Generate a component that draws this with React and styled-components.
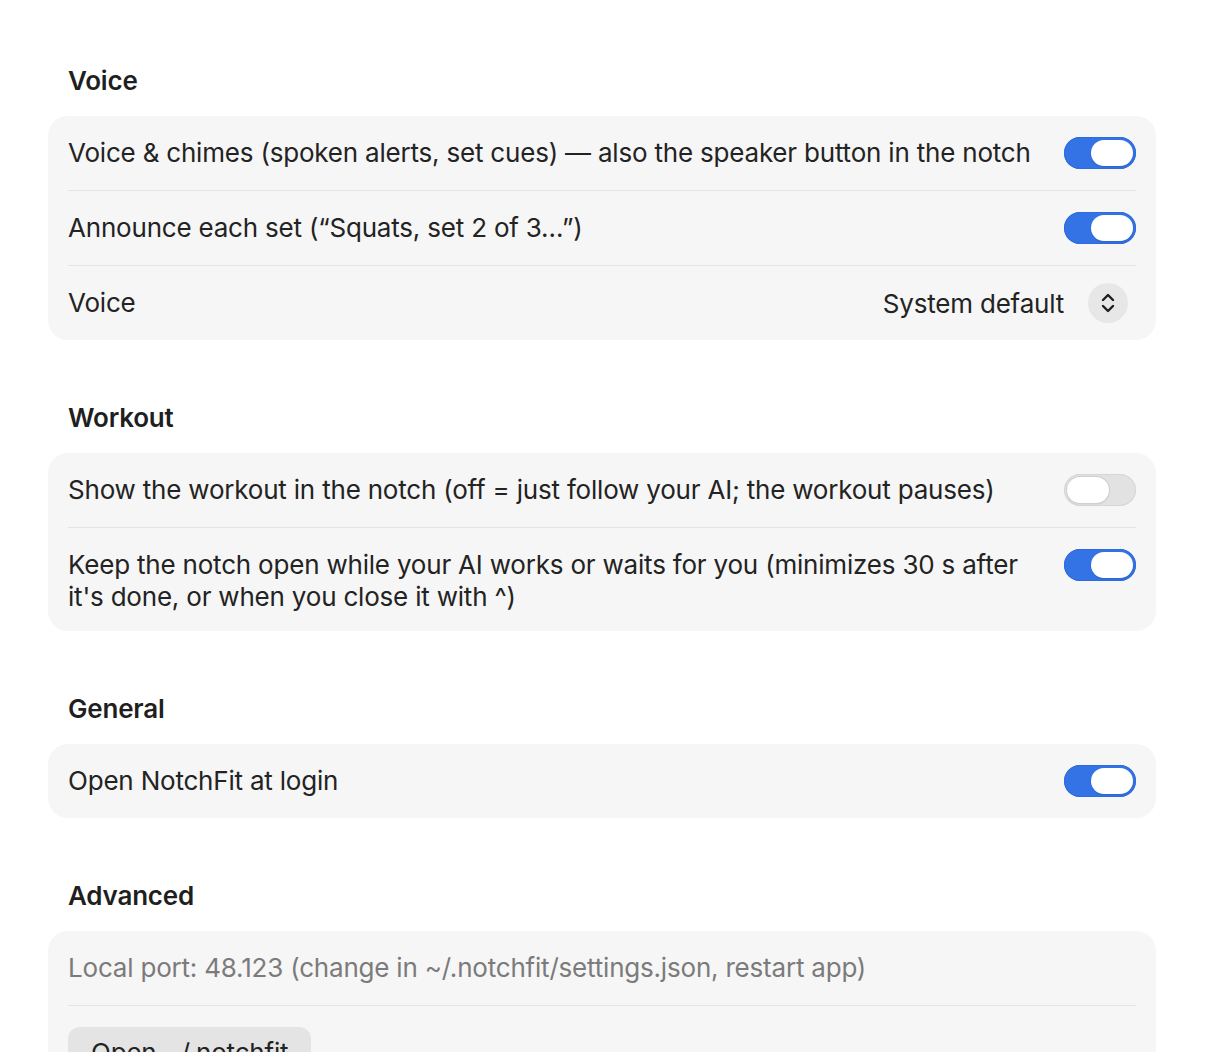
import styled, { createGlobalStyle } from 'styled-components';

const GlobalStyle = createGlobalStyle`
  html, body {
    margin: 0;
    background: #ffffff;
  }
  body {
    font-family: Inter, "Noto Sans", "Liberation Sans", sans-serif;
    color: #232323;
    -webkit-font-smoothing: antialiased;
  }
`;

const Page = styled.div`
  display: flex;
  flex-direction: column;
  gap: 63px;
  padding: 66px 50px 0 48px;
  height: 1052px;
  box-sizing: border-box;
  overflow: hidden;
`;

const Section = styled.section`
  display: flex;
  flex-direction: column;
  gap: 20px;
`;

const SectionTitle = styled.h2`
  margin: 0 0 0 20px;
  font-size: 26px;
  line-height: 30px;
  font-weight: 600;
  letter-spacing: -0.2px;
  color: #1f1f1f;
`;

const Card = styled.div`
  background: #f6f6f6;
  border-radius: 20px;
  padding: 0 20px;
`;

const Row = styled.div`
  display: flex;
  align-items: flex-start;
  gap: 32px;
  min-height: 74px;
  box-sizing: border-box;
  padding: 21px 0 18px;
  & + & {
    min-height: 75px;
    border-top: 1px solid #e4e4e4;
  }
`;

const Label = styled.div`
  flex: 1;
  font-size: 26px;
  line-height: 32px;
  letter-spacing: -0.2px;
  color: ${(p) => (p.$muted ? '#7b7b7b' : '#232323')};
`;

const Track = styled.div`
  position: relative;
  flex: none;
  width: 72px;
  height: 32px;
  box-sizing: border-box;
  border-radius: 16px;
  background: ${(p) => (p.$on ? '#3373e6' : '#e2e2e2')};
  box-shadow: inset 0 0 0 1px ${(p) => (p.$on ? '#2f6cdc' : '#d6d6d6')};
`;

const Knob = styled.div`
  position: absolute;
  top: 3px;
  left: ${(p) => (p.$on ? '27px' : '3px')};
  width: 42px;
  height: 26px;
  border-radius: 13px;
  background: #ffffff;
  box-shadow: 0 0 0 ${(p) => (p.$on ? '0' : '1px')} #cfcfcf,
    0 1px 2px rgba(0, 0, 0, 0.12);
`;

const Toggle = ({ on }) => (
  <Track $on={on}>
    <Knob $on={on} />
  </Track>
);

const Picker = styled.div`
  display: flex;
  align-items: center;
  gap: 24px;
  height: 32px;
  margin-right: 8px;
  font-size: 26px;
  letter-spacing: -0.2px;
  color: #232323;
`;

const Stepper = styled.div`
  flex: none;
  width: 40px;
  height: 40px;
  border-radius: 50%;
  background: #e7e7e7;
  display: flex;
  align-items: center;
  justify-content: center;
`;

const Chevrons = () => (
  <svg width="16" height="22" viewBox="0 0 16 22" fill="none">
    <path
      d="M3 8 L8 3 L13 8 M3 14 L8 19 L13 14"
      stroke="#1e1e1e"
      strokeWidth="2.4"
      strokeLinecap="round"
      strokeLinejoin="round"
    />
  </svg>
);

const Button = styled.button`
  font: inherit;
  font-size: 26px;
  line-height: 32px;
  letter-spacing: -0.2px;
  color: #232323;
  background: #e4e4e4;
  border: none;
  border-radius: 12px;
  padding: 10px 23px;
  text-align: left;
`;

export default function App() {
  return (
    <>
      <GlobalStyle />
      <Page>
        <Section>
          <SectionTitle>Voice</SectionTitle>
          <Card>
            <Row>
              <Label>Voice &amp; chimes (spoken alerts, set cues) — also the speaker button in the notch</Label>
              <Toggle on />
            </Row>
            <Row>
              <Label>Announce each set (“Squats, set 2 of 3…”)</Label>
              <Toggle on />
            </Row>
            <Row>
              <Label>Voice</Label>
              <Picker>
                System default
                <Stepper>
                  <Chevrons />
                </Stepper>
              </Picker>
            </Row>
          </Card>
        </Section>

        <Section>
          <SectionTitle>Workout</SectionTitle>
          <Card>
            <Row>
              <Label>Show the workout in the notch (off = just follow your AI; the workout pauses)</Label>
              <Toggle on={false} />
            </Row>
            <Row>
              <Label>
                Keep the notch open while your AI works or waits for you (minimizes 30 s after
                <br />
                it's done, or when you close it with ^)
              </Label>
              <Toggle on />
            </Row>
          </Card>
        </Section>

        <Section>
          <SectionTitle>General</SectionTitle>
          <Card>
            <Row>
              <Label>Open NotchFit at login</Label>
              <Toggle on />
            </Row>
          </Card>
        </Section>

        <Section>
          <SectionTitle>Advanced</SectionTitle>
          <Card>
            <Row>
              <Label $muted>Local port: 48.123 (change in ~/.notchfit/settings.json, restart app)</Label>
            </Row>
            <Row>
              <Button>Open ~/.notchfit</Button>
            </Row>
          </Card>
        </Section>
      </Page>
    </>
  );
}
